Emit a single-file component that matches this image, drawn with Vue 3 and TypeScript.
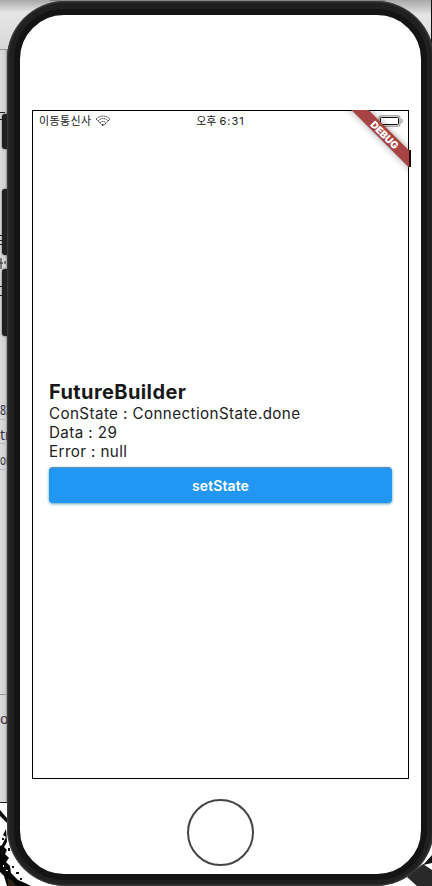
<script setup lang="ts">
interface Snapshot {
  label: string
  value: string
}

const rows: Snapshot[] = [
  { label: 'ConState', value: 'ConnectionState.done' },
  { label: 'Data', value: '29' },
  { label: 'Error', value: 'null' },
]
</script>

<template>
  <main class="desktop">
    <svg class="backdrop" width="432" height="886" viewBox="0 0 432 886" aria-hidden="true">
      <defs>
        <linearGradient id="edge" x1="0" x2="8" y1="0" y2="0" gradientUnits="userSpaceOnUse">
          <stop offset="0" stop-color="#dcdcdc" />
          <stop offset=".65" stop-color="#d0d0d0" />
          <stop offset="1" stop-color="#777" />
        </linearGradient>
        <linearGradient id="top" x1="0" x2="0" y1="0" y2="1">
          <stop offset="0" stop-color="#a8a8a8" />
          <stop offset=".25" stop-color="#e5e5e5" />
          <stop offset="1" stop-color="#d8d8d8" />
        </linearGradient>
      </defs>
      <rect width="432" height="886" fill="#fff" />
      <rect width="432" height="802" fill="url(#edge)" />
      <rect width="60" height="50" fill="url(#top)" />
      <rect x="370" width="61" height="60" fill="url(#top)" />
      <path d="M50 .5H385" stroke="#858585" />
      <path d="M431.5 0V60" stroke="#111" />
      <path d="M0 49.5H8M0 694.5H8" stroke="#999" />
      <path d="M0 419.5H8M0 443.5H8M0 469.5H8" stroke="#b9b9c5" />
      <path d="M0 112.5H5M0 119.5H3M0 802.5H7" stroke="#222" />
      <path d="M0 235.5H3M0 240.5H3M0 244.5H3M0 286.5H3M0 295.5H3" stroke="#222" />
      <path d="M0 263H3M1 258V269M5 261V264" stroke="#222" />
      <g class="scraps">
        <text x="0" y="415" textLength="12" lengthAdjust="spacingAndGlyphs">82</text>
        <text x="0" y="440">tr</text>
        <text x="0" y="465" textLength="10" lengthAdjust="spacingAndGlyphs">or</text>
        <text x="0" y="724">o</text>
      </g>
      <path d="M0 810L7 818V823L0 816Z" fill="#111" />
      <path d="M6 829L3 835L6 837L2 845L0 846V872L4 876L7 886H31L25 883L18 880L11 873L10 866L6 862L9 858L5 854L7 850L4 847L7 842Z" fill="#050505" />
      <path d="M7 878L13 881L16 886H8Z" fill="#2c211a" />
      <path d="M8 848h2v3h-2zM2 838h2v2H2zM12 866h2v2h-2zM16 872h3v2h-3zM20 878h2v2h-2zM1 850h2v4H1z" fill="#111" />
      <path d="M3 865h1v2H3zM6 870h2v1H6z" fill="#fff" />
      <path d="M407 877L423 864L432 870V886H417Z" fill="#292929" />
      <path d="M423 865L432 855V863Z" fill="#111" />
    </svg>

    <span class="side-key mute"></span>
    <span class="side-key up"></span>
    <span class="side-key down"></span>

    <section class="phone">
      <div class="face">
        <div class="screen">
          <header class="status">
            <span class="carrier">이동통신사</span>
            <svg class="wifi" width="16" height="12" viewBox="0 0 16 12" fill="none" stroke="#333" stroke-width="1" stroke-dasharray="1.5 .6">
              <path d="M1 4Q8-2 15 4L8 11Z" />
              <path d="M3 5.8Q8 1.4 13 5.8M5 7.8Q8 5 11 7.8" />
              <path d="M7 9.4h2" />
            </svg>
            <time class="clock">오후 <span class="digits">6:31</span></time>
            <svg class="battery" width="26" height="12" viewBox="0 0 26 12" fill="none">
              <rect x="1" y=".8" width="21" height="10.4" rx="3" stroke="#aaa" stroke-width="1.5" />
              <rect x="2.5" y="2.5" width="18" height="7" rx="1" fill="#fff" stroke="#111" />
              <path d="M24 4v4" stroke="#aaa" stroke-width="1.5" />
            </svg>
          </header>

          <div class="ribbon-clip"><span class="ribbon">DEBUG</span></div>
          <span class="ribbon-end"></span>

          <section class="builder">
            <h1>FutureBuilder</h1>
            <p v-for="row in rows" :key="row.label">{{ row.label }} : {{ row.value }}</p>
            <button type="button">setState</button>
          </section>
        </div>
        <span class="home"></span>
      </div>
    </section>
  </main>
</template>

<style>
body {
  margin: 0;
}
</style>

<style scoped>
.desktop {
  position: relative;
  box-sizing: border-box;
  width: 432px;
  height: 886px;
  padding: 1px 0 0 7px;
  overflow: hidden;
  font-family: Inter, 'Noto Sans CJK KR', sans-serif;
}
.backdrop {
  position: absolute;
  left: 0;
  top: 0;
}
.scraps {
  font: 14px 'Noto Sans', sans-serif;
  fill: #34344a;
}
.side-key {
  position: absolute;
  left: 2px;
  width: 9px;
  border-radius: 3px;
  background: #202020;
  box-shadow: 0 0 2px #444;
}
.mute {
  top: 114px;
  height: 35px;
}
.up {
  top: 189px;
  height: 66px;
}
.down {
  top: 269px;
  height: 67px;
}
.phone {
  position: relative;
  box-sizing: border-box;
  width: 427px;
  height: 885px;
  padding: 8px 7px 6px;
  border-radius: 58px;
  background: #202020;
  box-shadow: inset 0 0 2px 1px #444;
}
.face {
  display: flex;
  flex-direction: column;
  align-items: center;
  box-sizing: border-box;
  width: 413px;
  height: 871px;
  padding-top: 95px;
  border: 6px solid #141414;
  border-radius: 50px;
  background: #fff;
}
.screen {
  position: relative;
  box-sizing: border-box;
  width: 377px;
  height: 669px;
  border: 1px solid #000;
  background: #fff;
}
.status {
  display: grid;
  grid-template-columns: 1fr auto 1fr;
  grid-template-rows: 20px;
  align-items: center;
  padding: 0 4px 0 6px;
  font-size: 11px;
  line-height: 20px;
  color: #222;
}
.carrier {
  grid-area: 1 / 1;
  letter-spacing: 0.35px;
}
.wifi {
  grid-area: 1 / 1;
  margin-left: 56px;
}
.clock {
  grid-area: 1 / 2;
  margin-right: 2px;
}
.digits {
  letter-spacing: 1px;
}
.battery {
  grid-area: 1 / 3;
  justify-self: end;
}
.ribbon-clip {
  position: absolute;
  top: -1px;
  right: -1px;
  width: 70px;
  height: 70px;
  overflow: hidden;
}
.ribbon {
  position: absolute;
  box-sizing: border-box;
  left: -11px;
  top: 17px;
  width: 110px;
  height: 12px;
  padding-left: 5px;
  transform: rotate(45deg);
  background: #a84444;
  box-shadow: 0 0 7px rgba(0, 0, 0, 0.38);
  color: #fff;
  font-size: 10px;
  font-weight: 900;
  line-height: 12px;
  text-align: center;
}
.ribbon-end {
  position: absolute;
  top: 39px;
  right: -3px;
  width: 2px;
  height: 17px;
  background: #210505;
}
.builder {
  padding: 250px 16px 0;
  color: #222;
}
h1,
p {
  margin: 0;
  white-space: nowrap;
}
h1 {
  font-size: 20px;
  font-weight: 700;
  line-height: 23px;
  letter-spacing: 0.4px;
  color: #181818;
}
p {
  font-size: 15.2px;
  line-height: 19px;
  letter-spacing: 0.4px;
}
button {
  display: block;
  width: 343px;
  height: 36px;
  margin-top: 6px;
  padding: 0;
  border: 0;
  border-top: 1px solid #648eae;
  border-radius: 4px;
  background: #2196f3;
  box-shadow: 0 1px 3px #5c9fb6;
  color: #fff;
  font: 600 14px/34px Inter, sans-serif;
  letter-spacing: 0.1px;
}
.home {
  box-sizing: border-box;
  width: 67px;
  height: 67px;
  margin-top: 20px;
  border: 2px solid #444;
  border-radius: 50%;
}
</style>
